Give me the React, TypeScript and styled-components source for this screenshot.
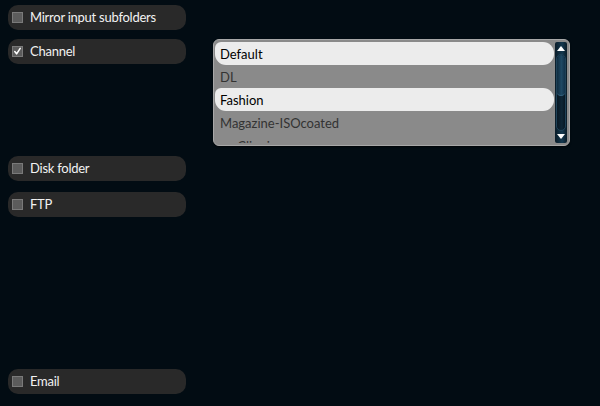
import styled, { createGlobalStyle } from "styled-components";

const GlobalStyle = createGlobalStyle`
  html, body {
    margin: 0;
    padding: 0;
    background: #020c13;
    font-family: Lato, "Open Sans", "Liberation Sans", sans-serif;
  }
`;

type Option = { label: string, selected?: boolean };

const profiles: Option[] = [
  { label: "Default", selected: true },
  { label: "DL" },
  { label: "Fashion", selected: true },
  { label: "Magazine-ISOcoated" },
  { label: "myClipping" },
];

const Check = ({ checked }: { checked?: boolean }) => (
  <Box>
    {checked &&
      <svg width="11" height="11" viewBox="0 0 11 11">
        <path d="M2.2 5.6 L4.4 8.4 L8.8 1.6" stroke="#fff" strokeWidth="1.9" fill="none" strokeLinecap="round" strokeLinejoin="round" />
      </svg>
    }
  </Box>
);

const Toggle = ({ label, checked }: { label: string, checked?: boolean }) => (
  <Panel>
    <Check checked={checked} />
    <Label>{label}</Label>
  </Panel>
);

const App = () => {
  return (
    <>
      <GlobalStyle />
      <Page>
        <Section $top={5}>
          <Toggle label="Mirror input subfolders" />
        </Section>
        <Section $top={9}>
          <Toggle label="Channel" checked />
          <ListBox>
            <Items>
              {profiles.map((p) => (
                <Item key={p.label} $selected={p.selected}>{p.label}</Item>
              ))}
            </Items>
            <ScrollBar>
              <Arrow $down={false} />
              <Track>
                <Thumb />
              </Track>
              <Arrow $down />
            </ScrollBar>
          </ListBox>
        </Section>
        <Section $top={10}>
          <Toggle label="Disk folder" />
        </Section>
        <Section $top={11} $height={177}>
          <Toggle label="FTP" />
        </Section>
        <Section $top={0}>
          <Toggle label="Email" />
        </Section>
      </Page>
    </>
  );
};

const Page = styled.div`
  width: 600px;
  height: 406px;
  padding: 0 8px;
  box-sizing: border-box;
  display: flex;
  flex-direction: column;
  overflow: hidden;
`;

const Section = styled.div<{ $top: number, $height?: number }>`
  display: grid;
  grid-template-columns: 178px 357px;
  column-gap: 27px;
  align-items: start;
  margin-top: ${(p) => p.$top}px;
  ${(p) => p.$height ? `height: ${p.$height}px;` : ""}
`;

const Panel = styled.div`
  height: 25px;
  background: #292929;
  border-radius: 10px;
  display: flex;
  align-items: center;
  padding-left: 4px;
  gap: 7px;
`;

const Box = styled.span`
  width: 11px;
  height: 11px;
  box-sizing: border-box;
  background: #5c5c5c;
  border: 1px solid #7a7a7a;
  display: flex;
  align-items: center;
  justify-content: center;
  margin-top: -1px;
`;

const Label = styled.span`
  color: #f2f2f2;
  font-size: 13px;
  letter-spacing: -0.25px;
  line-height: 1;
`;

const ListBox = styled.div`
  height: 107px;
  box-sizing: border-box;
  background: #8a8a8a;
  border: 1px solid #a8a8a8;
  border-radius: 6px;
  box-shadow: 0 1px 2px rgba(0, 0, 0, 0.6);
  display: flex;
  padding: 2px 2px 2px 1px;
  overflow: hidden;
`;

const Items = styled.div`
  flex: 1;
  overflow: hidden;
  padding-right: 1px;
`;

const Item = styled.div<{ $selected?: boolean }>`
  height: 23px;
  box-sizing: border-box;
  display: flex;
  align-items: center;
  padding-left: 5px;
  font-size: 13px;
  color: ${(p) => p.$selected ? "#000" : "#333"};
  background: ${(p) => p.$selected ? "#ececec" : "transparent"};
  border-radius: ${(p) => p.$selected ? "11px" : "0"};
  border-top-left-radius: 6px;
`;

const ScrollBar = styled.div`
  width: 12px;
  display: flex;
  flex-direction: column;
  align-items: center;
  background: linear-gradient(90deg, #0a1c28, #14384f 60%, #0a1c28);
  border-radius: 2px;
  padding: 1px 0;
  box-sizing: border-box;
`;

const Arrow = styled.span<{ $down: boolean }>`
  width: 0;
  height: 0;
  margin: 3px 0;
  border-left: 4px solid transparent;
  border-right: 4px solid transparent;
  ${(p) => p.$down ? "border-top: 5px solid #fff;" : "border-bottom: 5px solid #fff;"}
`;

const Track = styled.div`
  flex: 1;
  width: 10px;
  border-radius: 5px;
  background: linear-gradient(90deg, #081824, #0e2636 60%, #081824);
  border: 1px solid #1f4258;
  box-sizing: border-box;
  overflow: hidden;
`;

const Thumb = styled.div`
  height: 40px;
  border-radius: 5px;
  background: linear-gradient(90deg, #112d40, #1f4964 55%, #12324a);
  border-bottom: 1px solid #34627f;
`;

export default App;
